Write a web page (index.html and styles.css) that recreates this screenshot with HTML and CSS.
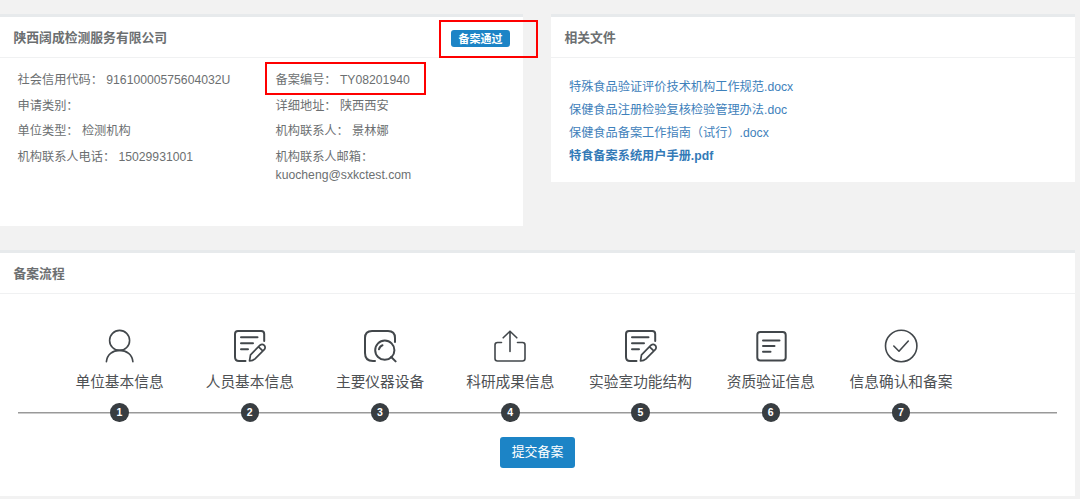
FILE: index.html
```
<!DOCTYPE html>
<html lang="zh-CN">
<head>
<meta charset="UTF-8">
<meta name="viewport" content="width=device-width, initial-scale=1.0">
<title>备案流程</title>
<link rel="stylesheet" href="styles.css">
</head>
<body>

<div class="wrapper">
    <div class="row-top">
        <!-- 机构信息 -->
        <div class="ibox ibox-company">
            <div class="ibox-title">
                <h5>陕西阔成检测服务有限公司</h5>
                <span class="label-pass">备案通过</span>
            </div>
            <div class="ibox-content company-info">
                <div class="info-col">
                    <p>社会信用代码： 91610000575604032U</p>
                    <p>申请类别：</p>
                    <p>单位类型： 检测机构</p>
                    <p>机构联系人电话： 15029931001</p>
                </div>
                <div class="info-col">
                    <p>备案编号： TY08201940</p>
                    <p>详细地址： 陕西西安</p>
                    <p>机构联系人： 景林娜</p>
                    <p>机构联系人邮箱：<br>kuocheng@sxkctest.com</p>
                </div>
            </div>
            <div class="mark mark-status"></div>
            <div class="mark mark-number"></div>
        </div>

        <!-- 相关文件 -->
        <div class="ibox ibox-files">
            <div class="ibox-title">
                <h5>相关文件</h5>
            </div>
            <div class="ibox-content">
                <ul class="file-list">
                    <li><a href="#">特殊食品验证评价技术机构工作规范.docx</a></li>
                    <li><a href="#">保健食品注册检验复核检验管理办法.doc</a></li>
                    <li><a href="#">保健食品备案工作指南（试行）.docx</a></li>
                    <li><a href="#" class="strong">特食备案系统用户手册.pdf</a></li>
                </ul>
            </div>
        </div>
    </div>

    <!-- 备案流程 -->
    <div class="ibox ibox-flow">
        <div class="ibox-title">
            <h5>备案流程</h5>
        </div>
        <div class="ibox-content flow-content">
            <div class="steps">
                <div class="step">
                    <svg class="step-icon icon-user" viewBox="0 0 34 34">
                        <circle cx="16.6" cy="11.4" r="10"/>
                        <path d="M3.4 32.8C4 25.8 9.6 21.4 16.6 21.4S29.3 25.8 29.9 32.8"/>
                    </svg>
                    <span class="step-name">单位基本信息</span>
                    <span class="step-num">1</span>
                </div>
                <div class="step">
                    <svg class="step-icon" viewBox="0 0 34 34">
                        <path d="M31.2 12V5Q31.2 2 28.2 2H5Q2 2 2 5V28Q2 32 6 32H12.5M8 8.3H24.5M8 14.2H20M8 20.2H15"/>
                        <path class="thin" d="M16.5 32L17.5 25.8 27 16.2Q29.2 14.6 31.3 16.4 33 18.4 31.2 20.7L22 29.9Q19.8 31.9 16.5 32ZM25.6 17.8L29.8 21.9"/>
                    </svg>
                    <span class="step-name">人员基本信息</span>
                    <span class="step-num">2</span>
                </div>
                <div class="step">
                    <svg class="step-icon" viewBox="0 0 34 34">
                        <path d="M32 13V9Q32 2 25 2H9Q2 2 2 9V24Q2 32 10 32H12"/>
                        <circle cx="21.8" cy="21.2" r="9.6"/>
                        <path d="M28.2 28L32.6 32.4M16 20.3Q16.8 17 19.5 16.2"/>
                    </svg>
                    <span class="step-name">主要仪器设备</span>
                    <span class="step-num">3</span>
                </div>
                <div class="step">
                    <svg class="step-icon icon-share" viewBox="0 0 34 34">
                        <path d="M8.5 13.5H4.5Q2 13.5 2 16V29.5Q2 32 4.5 32H29.5Q32 32 32 29.5V16Q32 13.5 29.5 13.5H24.5M17 22.5V2.2M10.2 8.8L17 2.2 23.8 8.8"/>
                    </svg>
                    <span class="step-name">科研成果信息</span>
                    <span class="step-num">4</span>
                </div>
                <div class="step">
                    <svg class="step-icon" viewBox="0 0 34 34">
                        <path d="M31.2 12V5Q31.2 2 28.2 2H5Q2 2 2 5V28Q2 32 6 32H12.5M8 8.3H24.5M8 14.2H20M8 20.2H15"/>
                        <path class="thin" d="M16.5 32L17.5 25.8 27 16.2Q29.2 14.6 31.3 16.4 33 18.4 31.2 20.7L22 29.9Q19.8 31.9 16.5 32ZM25.6 17.8L29.8 21.9"/>
                    </svg>
                    <span class="step-name">实验室功能结构</span>
                    <span class="step-num">5</span>
                </div>
                <div class="step">
                    <svg class="step-icon" viewBox="0 0 34 34">
                        <rect x="3.3" y="3" width="28.4" height="28.4" rx="3"/>
                        <path d="M9 11.5H25.5M9 17H20.5M9 22.8H16.5"/>
                    </svg>
                    <span class="step-name">资质验证信息</span>
                    <span class="step-num">6</span>
                </div>
                <div class="step">
                    <svg class="step-icon icon-check" viewBox="0 0 34 34">
                        <circle cx="17.2" cy="17" r="15.7"/>
                        <path d="M9.8 17L15 22.2 24.3 12"/>
                    </svg>
                    <span class="step-name">信息确认和备案</span>
                    <span class="step-num">7</span>
                </div>
            </div>
            <button class="btn-submit" type="button">提交备案</button>
        </div>
    </div>
</div>

</body>
</html>
```
FILE: styles.css
```
* {
    box-sizing: border-box;
}

body {
    margin: 0;
    background-color: #f2f2f2;
    color: #6c6f71;
    font-family: "Liberation Sans", Arial, "Noto Sans CJK SC", sans-serif;
    font-size: 12.2px;
    line-height: 17.4px;
    overflow: hidden;
}

.wrapper {
    padding: 14px 5px 0 0;
}

.row-top {
    display: flex;
    align-items: flex-start;
    justify-content: space-between;
    height: 236px;
}

/* 面板 */
.ibox {
    position: relative;
    background-color: #fff;
    border-top: 3px solid #e7eaec;
}

.ibox-company {
    width: 523.4px;
    height: 212px;
}

.ibox-files {
    width: 524px;
    height: 168px;
}

.ibox-flow {
    height: 246px;
}

.ibox-title {
    display: flex;
    align-items: center;
    justify-content: space-between;
    height: 41px;
    padding: 1px 13.5px 0;
    border-bottom: 1px solid #f0f1f2;
}

.ibox-title h5 {
    margin: 0;
    font-size: 12.8px;
    font-weight: bold;
}

.label-pass {
    width: 59px;
    height: 17px;
    margin-top: 1px;
    border-radius: 3px;
    background-color: #1c84c6;
    color: #fff;
    font-size: 11px;
    font-weight: bold;
    line-height: 18px;
    text-align: center;
}

.company-info {
    display: flex;
    padding: 14px 17.6px;
}

.info-col {
    flex: none;
    width: 258px;
}

.info-col p {
    margin: 0 0 8.3px;
    white-space: nowrap;
}

/* 红框标注 */
.mark {
    position: absolute;
    border: 2px solid #fe0000;
}

.mark-status {
    left: 439px;
    top: 3px;
    width: 99px;
    height: 38px;
}

.mark-number {
    left: 265px;
    top: 45px;
    width: 161px;
    height: 33px;
}

/* 文件列表 */
.file-list {
    margin: 0;
    padding: 18.3px 18px;
    list-style: none;
    line-height: 22.8px;
}

.file-list a {
    color: #3e81bb;
    text-decoration: none;
}

.file-list .strong {
    color: #337ab7;
    font-weight: bold;
}

/* 流程步骤 */
.flow-content {
    display: flex;
    flex-direction: column;
    align-items: center;
    padding: 35px 18px 0;
}

.steps {
    display: flex;
    align-self: stretch;
    height: 93px;
    padding-left: 36.4px;
    background: linear-gradient(#999, #999) 0 83px / 100% 1.5px no-repeat;
}

.step {
    display: flex;
    flex: none;
    flex-direction: column;
    align-items: center;
    width: 130.25px;
}

.step-icon {
    width: 34px;
    height: 34px;
    fill: none;
    stroke: #42474b;
    stroke-width: 2;
    stroke-linecap: round;
    stroke-linejoin: round;
}

.step-icon .thin {
    stroke-width: 1.7;
}

.icon-user,
.icon-share,
.icon-check {
    stroke-width: 1.6;
}

.step-name {
    height: 22px;
    margin-top: 8px;
    color: #4e5154;
    font-size: 14.7px;
    line-height: 22px;
    white-space: nowrap;
}

.step-num {
    width: 18.5px;
    height: 18.5px;
    margin-top: 10.2px;
    border-radius: 50%;
    background-color: #383d41;
    color: #fff;
    font-size: 10.5px;
    font-weight: bold;
    line-height: 18.5px;
    text-align: center;
}

.btn-submit {
    width: 75px;
    height: 31px;
    margin-top: 14.5px;
    padding: 0 0 3px;
    border: none;
    border-radius: 3px;
    background-color: #1c84c6;
    color: #fff;
    font-family: inherit;
    font-size: 12.9px;
    cursor: pointer;
}
```
